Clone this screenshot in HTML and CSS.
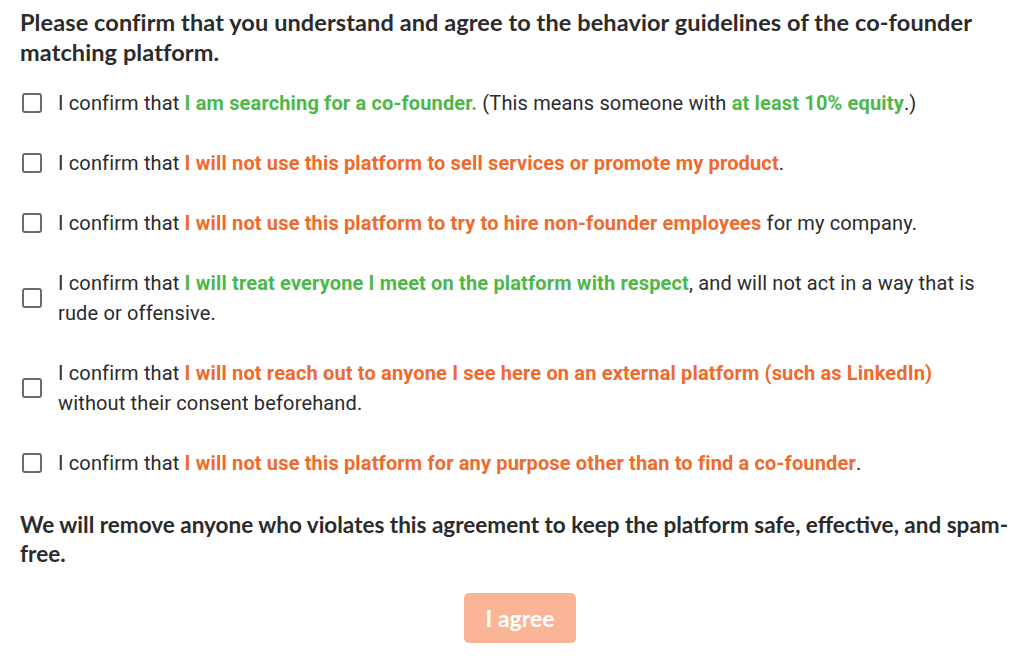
FILE: index.html
```html
<!DOCTYPE html>
<html>
<head>
<meta charset="utf-8">
<link rel="stylesheet" href="styles.css">
</head>
<body>
<div class="page">
  <h1 class="title">Please confirm that you understand and agree to the behavior guidelines of the co-founder matching platform.</h1>
  <ul class="list">
    <li class="row"><span class="box"></span><p class="text">I confirm that <b class="g">I am searching for a co-founder.</b> (This means someone with <b class="g">at least 10% equity</b>.)</p></li>
    <li class="row"><span class="box"></span><p class="text">I confirm that <b class="o">I will not use this platform to sell services or promote my product</b>.</p></li>
    <li class="row"><span class="box"></span><p class="text">I confirm that <b class="o">I will not use this platform to try to hire non-founder employees</b> for my company.</p></li>
    <li class="row"><span class="box"></span><p class="text">I confirm that <b class="g">I will treat everyone I meet on the platform with respect</b>, and will not act in a way that is rude or offensive.</p></li>
    <li class="row"><span class="box"></span><p class="text">I confirm that <b class="o">I will not reach out to anyone I see here on an external platform (such as LinkedIn)</b> without their consent beforehand.</p></li>
    <li class="row"><span class="box"></span><p class="text">I confirm that <b class="o">I will not use this platform for any purpose other than to find a co-founder</b>.</p></li>
  </ul>
  <p class="footer">We will remove anyone who violates this agreement to keep the platform safe, effective, and spam-free.</p>
  <div class="actions"><button class="btn">I agree</button></div>
</div>
</body>
</html>
```

FILE: styles.css
```css
html, body { margin: 0; padding: 0; background: #fff; }
.page { padding: 7px 10px 0 20px; color: #2b2b2b; }
.title { font-family: Lato, "Open Sans", sans-serif; font-weight: 700; font-size: 23.5px; line-height: 30px; margin: 0; letter-spacing: 0.1px; max-width: 980px; }
.list { list-style: none; margin: 21px 0 0; padding: 0; display: flex; flex-direction: column; gap: 30px; }
.row { display: flex; align-items: center; gap: 16px; padding-left: 2px; }
.box { flex: 0 0 auto; width: 16px; height: 16px; border: 2px solid #6b6b6b; border-radius: 3px; }
.text { margin: 0; font-family: Roboto, sans-serif; font-size: 20px; line-height: 30px; letter-spacing: 0.15px; color: #2b2b2b; max-width: 935px; }
.g { color: #4cb84a; font-weight: 700; }
.o { color: #f06a2c; font-weight: 700; }
.footer { font-family: Lato, "Open Sans", sans-serif; font-weight: 700; font-size: 22.5px; line-height: 29px; margin: 32px 0 0; }
.actions { display: flex; justify-content: center; margin-top: 25px; padding-left: 6px; }
.btn { width: 112px; height: 50px; border: none; border-radius: 5px; background: #f9b596; color: #fff; font-family: Lato, sans-serif; font-weight: 700; font-size: 23px; }
```
